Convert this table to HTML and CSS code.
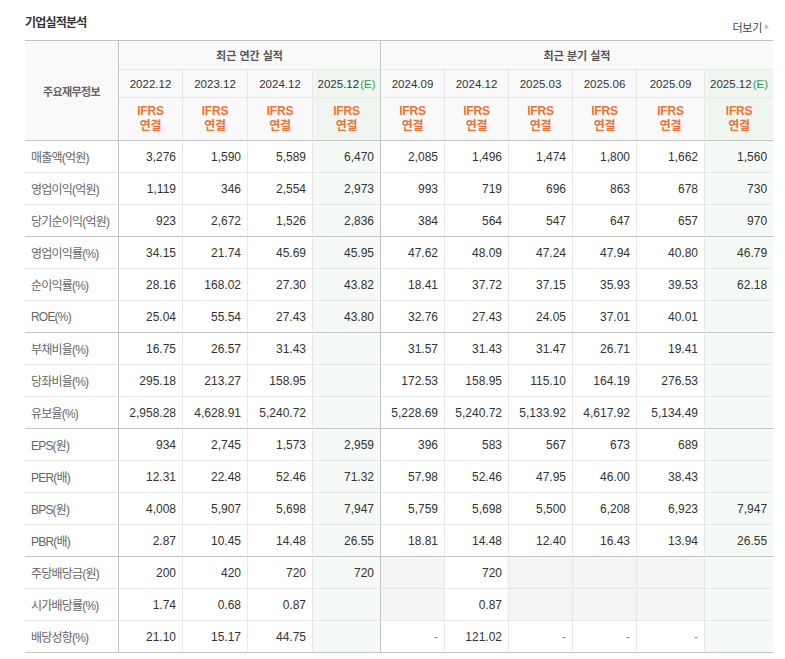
FILE: index.html
```html
<!DOCTYPE html>
<html lang="ko">
<head>
<meta charset="utf-8">
<title>기업실적분석</title>
<link rel="stylesheet" href="styles.css">
</head>
<body>
<div class="wrap">
  <div class="head">
    <h3 class="title">기업실적분석</h3>
    <a class="more" href="#">더보기<span class="tri"></span></a>
  </div>
  <table class="fin">
    <colgroup>
      <col class="c-lab">
      <col class="c64"><col class="c65"><col class="c65"><col class="c68">
      <col class="c64"><col class="c64"><col class="c64"><col class="c64"><col class="c68"><col class="c68">
    </colgroup>
    <thead>
      <tr class="h1">
        <th rowspan="3" class="corner">주요재무정보</th>
        <th colspan="4" class="grp">최근 연간 실적</th>
        <th colspan="6" class="grp last">최근 분기 실적</th>
      </tr>
      <tr class="h2">
        <th>2022.12</th><th>2023.12</th><th>2024.12</th><th class="e">2025.12<em>(E)</em></th>
        <th>2024.09</th><th>2024.12</th><th>2025.03</th><th>2025.06</th><th>2025.09</th><th class="e">2025.12<em>(E)</em></th>
      </tr>
      <tr class="h3">
        <th>IFRS<br>연결</th><th>IFRS<br>연결</th><th>IFRS<br>연결</th><th class="e">IFRS<br>연결</th>
        <th>IFRS<br>연결</th><th>IFRS<br>연결</th><th>IFRS<br>연결</th><th>IFRS<br>연결</th><th>IFRS<br>연결</th><th class="e">IFRS<br>연결</th>
      </tr>
    </thead>
    <tbody>
      <tr><td>매출액(억원)</td><td>3,276</td><td>1,590</td><td>5,589</td><td>6,470</td><td>2,085</td><td>1,496</td><td>1,474</td><td>1,800</td><td>1,662</td><td>1,560</td></tr>
      <tr><td>영업이익(억원)</td><td>1,119</td><td>346</td><td>2,554</td><td>2,973</td><td>993</td><td>719</td><td>696</td><td>863</td><td>678</td><td>730</td></tr>
      <tr class="end"><td>당기순이익(억원)</td><td>923</td><td>2,672</td><td>1,526</td><td>2,836</td><td>384</td><td>564</td><td>547</td><td>647</td><td>657</td><td>970</td></tr>
      <tr><td>영업이익률(%)</td><td>34.15</td><td>21.74</td><td>45.69</td><td>45.95</td><td>47.62</td><td>48.09</td><td>47.24</td><td>47.94</td><td>40.80</td><td>46.79</td></tr>
      <tr><td>순이익률(%)</td><td>28.16</td><td>168.02</td><td>27.30</td><td>43.82</td><td>18.41</td><td>37.72</td><td>37.15</td><td>35.93</td><td>39.53</td><td>62.18</td></tr>
      <tr class="end"><td>ROE(%)</td><td>25.04</td><td>55.54</td><td>27.43</td><td>43.80</td><td>32.76</td><td>27.43</td><td>24.05</td><td>37.01</td><td>40.01</td><td></td></tr>
      <tr><td>부채비율(%)</td><td>16.75</td><td>26.57</td><td>31.43</td><td></td><td>31.57</td><td>31.43</td><td>31.47</td><td>26.71</td><td>19.41</td><td></td></tr>
      <tr><td>당좌비율(%)</td><td>295.18</td><td>213.27</td><td>158.95</td><td></td><td>172.53</td><td>158.95</td><td>115.10</td><td>164.19</td><td>276.53</td><td></td></tr>
      <tr class="end"><td>유보율(%)</td><td>2,958.28</td><td>4,628.91</td><td>5,240.72</td><td></td><td>5,228.69</td><td>5,240.72</td><td>5,133.92</td><td>4,617.92</td><td>5,134.49</td><td></td></tr>
      <tr><td>EPS(원)</td><td>934</td><td>2,745</td><td>1,573</td><td>2,959</td><td>396</td><td>583</td><td>567</td><td>673</td><td>689</td><td></td></tr>
      <tr><td>PER(배)</td><td>12.31</td><td>22.48</td><td>52.46</td><td>71.32</td><td>57.98</td><td>52.46</td><td>47.95</td><td>46.00</td><td>38.43</td><td></td></tr>
      <tr><td>BPS(원)</td><td>4,008</td><td>5,907</td><td>5,698</td><td>7,947</td><td>5,759</td><td>5,698</td><td>5,500</td><td>6,208</td><td>6,923</td><td>7,947</td></tr>
      <tr class="end"><td>PBR(배)</td><td>2.87</td><td>10.45</td><td>14.48</td><td>26.55</td><td>18.81</td><td>14.48</td><td>12.40</td><td>16.43</td><td>13.94</td><td>26.55</td></tr>
      <tr><td>주당배당금(원)</td><td>200</td><td>420</td><td>720</td><td>720</td><td class="na"></td><td>720</td><td class="na"></td><td class="na"></td><td class="na"></td><td></td></tr>
      <tr><td>시가배당률(%)</td><td>1.74</td><td>0.68</td><td>0.87</td><td></td><td class="na"></td><td>0.87</td><td class="na"></td><td class="na"></td><td class="na"></td><td></td></tr>
      <tr class="end"><td>배당성향(%)</td><td>21.10</td><td>15.17</td><td>44.75</td><td></td><td class="dash">-</td><td>121.02</td><td class="dash">-</td><td class="dash">-</td><td class="dash">-</td><td></td></tr>
    </tbody>
  </table>
</div>
</body>
</html>
```
FILE: styles.css
```css
html, body {
  margin: 0;
  padding: 0;
  background: #ffffff;
}

.wrap {
  width: 748px;
  padding: 0 12px 0 25px;
  font-family: "Liberation Sans", "Noto Sans CJK KR", sans-serif;
}

.head {
  display: flex;
  justify-content: space-between;
  align-items: flex-start;
  height: 40px;
}

.title {
  margin: 14px 0 0;
  font-family: "Noto Sans CJK KR", sans-serif;
  font-size: 12px;
  font-weight: bold;
  line-height: 16px;
  letter-spacing: -0.8px;
  color: #333333;
}

.more {
  margin-top: 20px;
  margin-right: 4px;
  display: flex;
  align-items: center;
  gap: 3px;
  font-family: "Noto Sans CJK KR", sans-serif;
  font-size: 11px;
  line-height: 14px;
  color: #444444;
  text-decoration: none;
  letter-spacing: -0.3px;
}

.tri {
  width: 0;
  height: 0;
  border-top: 3px solid transparent;
  border-bottom: 3px solid transparent;
  border-left: 4px solid #c4c4c4;
}

.fin {
  width: 748px;
  table-layout: fixed;
  border-collapse: separate;
  border-spacing: 0;
  border-top: 1px solid #c4c4c4;
}

.c-lab { width: 94px; }
.c64 { width: 64px; }
.c65 { width: 65px; }
.c68 { width: 68px; }

.fin th,
.fin td {
  box-sizing: border-box;
  padding: 0 6px;
  border-right: 1px solid #e8e8e8;
  border-bottom: 1px solid #e8e8e8;
  white-space: nowrap;
  overflow: hidden;
}

.fin thead th {
  background: #f9f9f9;
  text-align: center;
  font-weight: normal;
  padding: 0;
}

.fin thead .corner {
  border-right-color: #c4c4c4;
  border-bottom-color: #c4c4c4;
  font-family: "Noto Sans CJK KR", sans-serif;
  font-size: 11px;
  font-weight: bold;
  letter-spacing: -0.6px;
  color: #666666;
}

.fin .h1 th { height: 29px; }
.fin .h1 .grp {
  font-family: "Noto Sans CJK KR", sans-serif;
  font-size: 11px;
  font-weight: bold;
  color: #555555;
  border-right-color: #c4c4c4;
}
.fin .h1 .grp.last { border-right: 0; }

.fin .h2 th {
  height: 28px;
  font-size: 11.5px;
  color: #333333;
}
.h2 em {
  font-style: normal;
  color: #3a9a4c;
  margin-left: 1px;
}

.fin .h3 th {
  height: 43px;
  font-size: 12px;
  font-weight: bold;
  line-height: 15px;
  letter-spacing: -0.2px;
  color: #ef7235;
  border-bottom-color: #c4c4c4;
}

.fin .h2 th:nth-child(4),
.fin .h3 th:nth-child(4) { border-right-color: #c4c4c4; }
.fin .h2 th:nth-child(10),
.fin .h3 th:nth-child(10) { border-right: 0; }

.fin thead th.e { background: #eff6f0; }

.fin tbody td {
  height: 32px;
  text-align: right;
  font-size: 12px;
  color: #333333;
}

.fin tbody td:nth-child(1) {
  text-align: left;
  font-family: "Liberation Sans", "Noto Sans CJK KR", sans-serif;
  font-size: 12px;
  letter-spacing: -0.8px;
  color: #666666;
  border-right-color: #c4c4c4;
}

.fin tbody td:nth-child(5) {
  background: #f5faf6;
  border-right-color: #c4c4c4;
}

.fin tbody td:nth-child(11) {
  background: #f5faf6;
  border-right: 0;
}

.fin tbody td.na { background: #f5f5f5; }
.fin tbody td.dash { color: #888888; }

.fin tbody tr.end td { border-bottom-color: #c4c4c4; }
```
